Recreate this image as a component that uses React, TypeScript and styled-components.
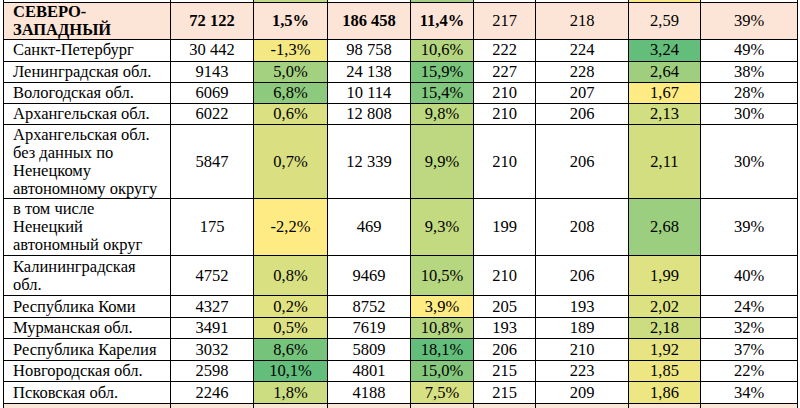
import React from "react";
import styled, { createGlobalStyle } from "styled-components";

const GlobalStyle = createGlobalStyle`
  html, body {
    margin: 0;
    padding: 0;
    background: #ffffff;
    overflow: hidden;
    font-family: "Liberation Serif", "Times New Roman", serif;
  }
`;

const Sheet = styled.div`
  padding-left: 3px;
  width: 800px;
  height: 408px;
  overflow: hidden;
  box-sizing: border-box;
`;

const Table = styled.table`
  border-collapse: collapse;
  table-layout: fixed;
  color: #000;
`;

const Col = styled.col<{ $w: number }>`
  width: ${(p) => p.$w}px;
`;

const Row = styled.tr<{ $h: number; $district?: boolean }>`
  height: ${(p) => p.$h}px;
  background: ${(p) => (p.$district ? "#fce4d6" : "#ffffff")};
`;

const Cell = styled.td<{ $bg?: string; $bold?: boolean }>`
  border: 1px solid #000;
  padding: 0;
  font-family: "Liberation Serif", "Times New Roman", serif;
  font-size: 16.5px;
  line-height: 18px;
  text-align: center;
  vertical-align: middle;
  white-space: nowrap;
  font-weight: ${(p) => (p.$bold ? 700 : 400)};
  background: ${(p) => p.$bg || "transparent"};
`;

const NameCell = styled(Cell)`
  text-align: left;
  padding-left: 9px;
  white-space: pre-line;
`;

const StripCell = styled.td<{ $bg?: string }>`
  border: 1px solid #000;
  border-top: none;
  padding: 0;
  height: 2px;
  background: ${(p) => p.$bg || "#ffffff"};
`;

const widths = [167, 83, 74, 83, 63, 62, 93, 72, 97];

// Excel two-colour scale: yellow -> green
const YELLOW = [255, 235, 132];
const GREEN = [99, 190, 123];

const scale = (v: number, min: number, max: number) => {
  const t = Math.max(0, Math.min(1, (v - min) / (max - min)));
  const c = YELLOW.map((y, i) => Math.round(y + (GREEN[i] - y) * t));
  return `rgb(${c[0]}, ${c[1]}, ${c[2]})`;
};

type Region = {
  name: string;
  n1: string;
  p1: number;
  n2: string;
  p2: number;
  a: string;
  b: string;
  r: number;
  s: string;
  h: number;
};

const regions: Region[] = [
  { name: "Санкт-Петербург", n1: "30 442", p1: -1.3, n2: "98 758", p2: 10.6, a: "222", b: "224", r: 3.24, s: "49%", h: 21.5 },
  { name: "Ленинградская обл.", n1: "9143", p1: 5.0, n2: "24 138", p2: 15.9, a: "227", b: "228", r: 2.64, s: "38%", h: 21 },
  { name: "Вологодская обл.", n1: "6069", p1: 6.8, n2: "10 114", p2: 15.4, a: "210", b: "207", r: 1.67, s: "28%", h: 21.5 },
  { name: "Архангельская обл.", n1: "6022", p1: 0.6, n2: "12 808", p2: 9.8, a: "210", b: "206", r: 2.13, s: "30%", h: 21 },
  {
    name: "Архангельская обл.\nбез данных по\nНенецкому\nавтономному округу",
    n1: "5847", p1: 0.7, n2: "12 339", p2: 9.9, a: "210", b: "206", r: 2.11, s: "30%", h: 74,
  },
  {
    name: "в том числе\nНенецкий\nавтономный округ",
    n1: "175", p1: -2.2, n2: "469", p2: 9.3, a: "199", b: "208", r: 2.68, s: "39%", h: 57,
  },
  { name: "Калининградская\nобл.", n1: "4752", p1: 0.8, n2: "9469", p2: 10.5, a: "210", b: "206", r: 1.99, s: "40%", h: 40 },
  { name: "Республика Коми", n1: "4327", p1: 0.2, n2: "8752", p2: 3.9, a: "205", b: "193", r: 2.02, s: "24%", h: 22 },
  { name: "Мурманская обл.", n1: "3491", p1: 0.5, n2: "7619", p2: 10.8, a: "193", b: "189", r: 2.18, s: "32%", h: 21 },
  { name: "Республика Карелия", n1: "3032", p1: 8.6, n2: "5809", p2: 18.1, a: "206", b: "210", r: 1.92, s: "37%", h: 22 },
  { name: "Новгородская обл.", n1: "2598", p1: 10.1, n2: "4801", p2: 15.0, a: "215", b: "223", r: 1.85, s: "22%", h: 21 },
  { name: "Псковская обл.", n1: "2246", p1: 1.8, n2: "4188", p2: 7.5, a: "215", b: "209", r: 1.86, s: "34%", h: 22 },
];

const pct = (v: number) => `${v.toFixed(1).replace(".", ",")}%`;
const dec = (v: number) => v.toFixed(2).replace(".", ",");

const App = () => {
  return (
    <>
      <GlobalStyle />
      <Sheet>
        <Table>
          <colgroup>
            {widths.map((w, i) => (
              <Col key={i} $w={w} />
            ))}
          </colgroup>
          <tbody>
            <tr>
              <StripCell />
              <StripCell />
              <StripCell $bg="#c3da8b" />
              <StripCell />
              <StripCell $bg="#a3cf88" />
              <StripCell />
              <StripCell />
              <StripCell $bg="#f9e88c" />
              <StripCell />
            </tr>
            <Row $h={37} $district>
              <NameCell $bold>{"СЕВЕРО-\nЗАПАДНЫЙ"}</NameCell>
              <Cell $bold>72 122</Cell>
              <Cell $bold>1,5%</Cell>
              <Cell $bold>186 458</Cell>
              <Cell $bold>11,4%</Cell>
              <Cell>217</Cell>
              <Cell>218</Cell>
              <Cell>2,59</Cell>
              <Cell>39%</Cell>
            </Row>
            {regions.map((r) => (
              <Row key={r.name} $h={r.h}>
                <NameCell>{r.name}</NameCell>
                <Cell>{r.n1}</Cell>
                <Cell $bg={scale(r.p1, -2.2, 10.1)}>{pct(r.p1)}</Cell>
                <Cell>{r.n2}</Cell>
                <Cell $bg={scale(r.p2, 3.9, 18.1)}>{pct(r.p2)}</Cell>
                <Cell>{r.a}</Cell>
                <Cell>{r.b}</Cell>
                <Cell $bg={scale(r.r, 1.67, 3.24)}>{dec(r.r)}</Cell>
                <Cell>{r.s}</Cell>
              </Row>
            ))}
            <Row $h={22} $district>
              <NameCell />
              <Cell />
              <Cell />
              <Cell />
              <Cell />
              <Cell />
              <Cell />
              <Cell />
              <Cell />
            </Row>
          </tbody>
        </Table>
      </Sheet>
    </>
  );
};

export default App;
